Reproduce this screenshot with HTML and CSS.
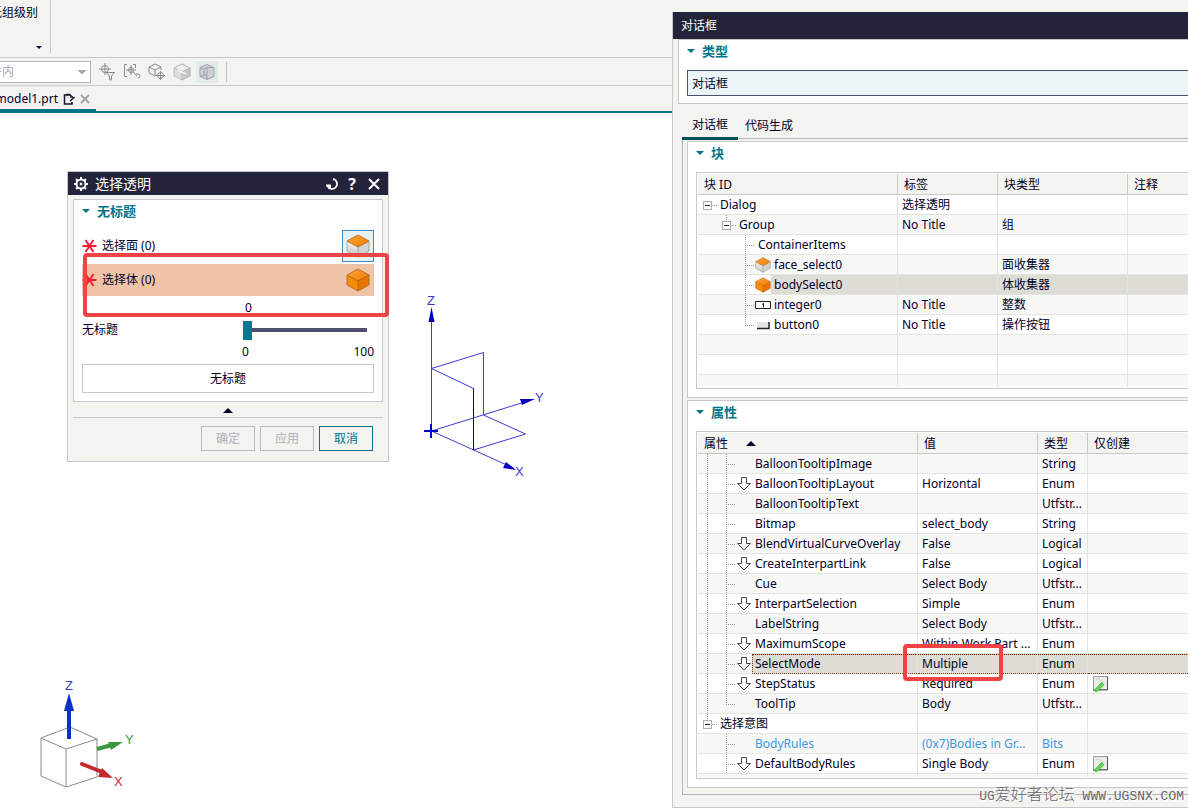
FILE: index.html
```html
<!DOCTYPE html>
<html lang="zh-CN">
<head>
    <meta charset="utf-8">
    <title>model1.prt</title>
    <link rel="stylesheet" href="styles.css">
</head>

<body>
    <!-- Shared icons -->
    <svg class="sprite" aria-hidden="true">
        <defs>
            <linearGradient id="orangeTop" x1="0" y1="0" x2="1" y2="1">
                <stop offset="0" stop-color="#ffa53a"/>
                <stop offset="1" stop-color="#f07c00"/>
            </linearGradient>
            <linearGradient id="greySide" x1="0" y1="0" x2="0" y2="1">
                <stop offset="0" stop-color="#f4f4f4"/>
                <stop offset="1" stop-color="#c4c4c4"/>
            </linearGradient>
        </defs>
        <symbol id="face" viewBox="0 0 24 24">
            <path d="M1 7v10l11 6V12z" fill="url(#greySide)"/>
            <path d="M23 7v10l-11 6V12z" fill="#d2d2d2"/>
            <path d="M12 1l11 6-11 6L1 7z" fill="url(#orangeTop)" stroke="#b86a10" stroke-width=".9"/>
            <path d="M1 7v10l11 6 11-6V7M12 13v10" fill="none" stroke="#a0a0a0" stroke-width=".9"/>
        </symbol>
        <symbol id="body" viewBox="0 0 24 24">
            <path d="M1 7v10l11 6V12z" fill="#f58a0c"/>
            <path d="M23 7v10l-11 6V12z" fill="#e67800"/>
            <path d="M12 1l11 6-11 6L1 7z" fill="url(#orangeTop)"/>
            <path d="M12 1l11 6v10l-11 6-11-6V7zM1 7l11 6 11-6M12 13v10" fill="none" stroke="#a85a08" stroke-width=".7"/>
        </symbol>
        <symbol id="down" viewBox="0 0 16 16">
            <path d="M5.500 1.500h5v6h4L8 14 1.500 7.500h4z" fill="#fff" stroke="#444" stroke-width="1"/>
        </symbol>
        <symbol id="edit" viewBox="0 0 16 16">
            <path d="M1.500.5h14v13h-14z" fill="#ececec" stroke="#9a9a9a"/>
            <path d="M15.500.5v13.500H1" fill="none" stroke="#555"/>
            <path d="M4 4q5-3 7 4" fill="none" stroke="#8fcf8f" stroke-dasharray="1 1"/>
            <path d="M3 13.500l6.500-7 2.500 2-6.500 7-2.500.5z" fill="#67d457" stroke="#3aa63c" stroke-width=".7"/>
        </symbol>
        <symbol id="star" viewBox="0 0 14 14">
            <path d="M0 7h14M3 1l8 12M11 1L3 13" stroke="#fa1e32" stroke-width="2" fill="none"/>
        </symbol>
    </svg>

    <div class="app">
        <div class="ribbon">
            <div class="ribbon-group">
                <span>低组级别</span>
                <i class="caret"></i>
            </div>
        </div>

        <div class="selection-bar">
            <select class="scope" aria-label="范围" disabled>
                <option>件内</option>
            </select>
            <button class="tool" aria-label="过滤器">
                <svg width="18" height="18" viewBox="0 0 18 18" fill="none" stroke="#8b8b90">
                    <circle cx="7" cy="6" r="3.500"/><path d="M1 6h12M7 0v12"/>
                    <path d="M8.500 9.500h8l-3 3.500v4h-2v-4z" fill="#f3f3f0"/>
                </svg>
            </button>
            <button class="tool" aria-label="选择范围">
                <svg width="18" height="18" viewBox="0 0 18 18" fill="none" stroke="#8b8b90">
                    <path d="M4 1.500H1.500v12H4M10 1.500h2.500V5"/><circle cx="8" cy="7" r="2.500"/><path d="M3 7h10M8 2v10M13 11h2q2 0 2 2t-2 2M10 9l4 4"/>
                </svg>
            </button>
            <button class="tool" aria-label="选择对象">
                <svg width="18" height="18" viewBox="0 0 18 18" fill="none" stroke="#8b8b90">
                    <path d="M8.500 12L7 13l-6-3V4l6-3 6 3v3M1 4l6 3 6-3M7 7v5"/><circle cx="12.500" cy="12.500" r="3"/><path d="M8 12.500h9M12.500 8v9"/>
                </svg>
            </button>
            <button class="tool" aria-label="着色">
                <svg width="18" height="18" viewBox="0 0 18 18" stroke="#b4b4b6" stroke-width=".8">
                    <path d="M9 1l8 4v8l-8 4-8-4V5z" fill="#dcdcdc"/><path d="M9 1l8 4-8 4-8-4z" fill="#eee"/><path d="M9 9l8-4v8l-8 4z" fill="#c8c8ca"/>
                    <path d="M5 7.500l8 3.500" stroke="#f5f5f5" stroke-width="1.500"/>
                </svg>
            </button>
            <button class="tool active" aria-label="透明">
                <svg width="18" height="18" viewBox="0 0 18 18" stroke="#a0a0a5" fill="#cfd1d4">
                    <path d="M9 1.500l7 3v9l-7 3-7-3v-9z"/><path d="M2 4.500l4 2 3-2 7 0M9 4.500v12M6 6.500V12l-4 1.500M6 12l3 1" fill="none"/>
                </svg>
            </button>
            <i class="separator"></i>
        </div>

        <div class="file-tabs">
            <a class="file-tab" href="#">
                <span>model1.prt</span>
                <svg width="12" height="12" viewBox="0 0 12 12" fill="none" stroke="#16162e" stroke-width="1.500">
                    <path d="M8 2H1.500v9H9V9M3 1.500h4M8 2v2h2M7 8l4.500-4"/>
                </svg>
                <svg width="10" height="10" viewBox="0 0 10 10" stroke="#a3a3a8" stroke-width="2"><path d="M1 1l8 8M9 1L1 9"/></svg>
            </a>
        </div>

        <main class="canvas">
            <svg class="datum" width="130" height="200" viewBox="0 0 130 200" fill="none" stroke="#3c3cd2">
                <path d="M16.500 30v121M16.500 88.500l52-16v62M16.500 88.500l42 20M16.500 151l90-28M16.500 151l82 37M68.500 135l42 19-52 16"/>
                <path d="M58.500 108v62" stroke="#000090"/>
                <path d="M9 151h14M16 144v14" stroke="#0000d0" stroke-width="2"/>
                <path d="M16.500 27l3 15h-6zM120 119l-13 6-2-6zM101 190l-13-2 3-6z" fill="#0000c0" stroke="none"/>
                <g class="axis"><text x="12" y="25">Z</text><text x="120" y="122">Y</text><text x="100" y="196">X</text></g>
            </svg>

            <svg class="view-triad" width="110" height="120" viewBox="0 0 110 120" fill="none">
                <path d="M11 65l29-11 27 12v38l-31 10-25-11zM11 65l25 11 31-10M36 76v38" stroke="#8a8a8a"/>
                <path d="M39 66V36" stroke="#0a32c8" stroke-width="4"/><path d="M39 20l5 18H34z" fill="#0a32c8"/>
                <path d="M67 76l15-4" stroke="#3b9a40" stroke-width="4"/><path d="M93 69l-12 8-3-8z" fill="#3b9a40"/>
                <path d="M52 91l20 8" stroke="#c4282c" stroke-width="4" stroke-linecap="round"/><path d="M83 105l-15-1 4-9z" fill="#c4282c"/>
                <g class="axis"><text class="z" x="35" y="17">Z</text><text class="y" x="95" y="71">Y</text><text class="x" x="84" y="113">X</text></g>
            </svg>
        </main>
    </div>

    <!-- Preview dialog -->
    <section class="window preview">
        <header class="titlebar">
            <svg width="16" height="16" viewBox="0 0 16 16" fill="none" stroke="#fff">
                <circle cx="8" cy="8" r="4.500" stroke-width="2"/><circle cx="8" cy="8" r="1" fill="#fff"/>
                <path d="M8 1v2M8 13v2M1 8h2M13 8h2M3 3l1.500 1.500M11.500 11.500L13 13M13 3l-1.500 1.500M4.500 11.500L3 13" stroke-width="2"/>
            </svg>
            <h1>选择透明</h1>
            <button aria-label="重置">
                <svg width="14" height="14" viewBox="0 0 14 14" fill="none" stroke="#fff" stroke-width="2"><path d="M8 2a5 5 0 1 1-5.500 7M1 8.500h4v3.500" stroke-width="1.800"/></svg>
            </button>
            <button class="help">?</button>
            <button aria-label="关闭">
                <svg width="12" height="12" viewBox="0 0 12 12" stroke="#fff" stroke-width="2"><path d="M1 1l10 10M11 1L1 11"/></svg>
            </button>
        </header>
        <div class="preview-body">
            <div class="panel">
                <h2>无标题</h2>
                <div class="pick">
                    <svg width="15" height="14"><use href="#star"/></svg>
                    <span>选择面 (0)</span>
                    <button class="pick-button focused" aria-label="选择面"><svg width="24" height="24"><use href="#face"/></svg></button>
                </div>
                <div class="pick current">
                    <svg width="15" height="14"><use href="#star"/></svg>
                    <span>选择体 (0)</span>
                    <button class="pick-button" aria-label="选择体"><svg width="24" height="24"><use href="#body"/></svg></button>
                </div>
                <div class="slider">
                    <output for="level">0</output>
                    <label for="level">无标题</label>
                    <input type="range" id="level" min="0" max="100" value="0">
                    <div class="limits"><span>0</span><span>100</span></div>
                </div>
                <button class="action">无标题</button>
            </div>
            <div class="collapse"><i class="caret up"></i></div>
            <footer>
                <button disabled>确定</button>
                <button disabled>应用</button>
                <button class="cancel">取消</button>
            </footer>
        </div>
        <div class="mark mark-body"></div>
    </section>

    <!-- Block styler dialog -->
    <section class="window styler">
        <header class="titlebar"><h1>对话框</h1></header>
        <div class="styler-body">
            <div class="panel">
                <h2><label for="kind">类型</label></h2>
                <input class="kind" id="kind" type="text" value="对话框">
            </div>
            <nav class="tabs">
                <a class="active" href="#">对话框</a>
                <a href="#">代码生成</a>
            </nav>
            <div class="tab-body">
                <div class="panel">
                    <h2>块</h2>
                    <div class="table-box">
                        <table class="blocks">
                            <colgroup><col class="c200"><col class="c100"><col class="c130"><col></colgroup>
                            <thead>
                                <tr><th>块 ID</th><th>标签</th><th>块类型</th><th>注释</th></tr>
                            </thead>
                            <tbody>
                                <tr><td><div class="node"><i class="box"></i><span>Dialog</span></div></td><td>选择透明</td><td></td><td></td></tr>
                                <tr><td><div class="node"><i></i><i class="box below"></i><span>Group</span></div></td><td>No Title</td><td>组</td><td></td></tr>
                                <tr><td><div class="node"><i></i><i></i><i class="branch"></i><span>ContainerItems</span></div></td><td></td><td></td><td></td></tr>
                                <tr><td><div class="node"><i></i><i></i><i class="branch"></i><svg><use href="#face"/></svg><span>face_select0</span></div></td><td></td><td>面收集器</td><td></td></tr>
                                <tr class="selected"><td><div class="node"><i></i><i></i><i class="branch"></i><svg><use href="#body"/></svg><span>bodySelect0</span></div></td><td></td><td>体收集器</td><td></td></tr>
                                <tr><td><div class="node"><i></i><i></i><i class="branch"></i><svg viewBox="0 0 16 16"><path d="M.5 4.500h15v7H.5z" fill="#fff" stroke="#222"/><path d="M7 7.500l1.500-1v4" fill="none" stroke="#222"/></svg><span>integer0</span></div></td><td>No Title</td><td>整数</td><td></td></tr>
                                <tr><td><div class="node"><i></i><i></i><i class="branch end"></i><svg viewBox="0 0 16 16"><path d="M2 5h11v6H2z" fill="#e4e4e4"/><path d="M2 11.500h12V5" fill="none" stroke="#222" stroke-width="1.500"/></svg><span>button0</span></div></td><td>No Title</td><td>操作按钮</td><td></td></tr>
                                <tr><td></td><td></td><td></td><td></td></tr>
                                <tr><td></td><td></td><td></td><td></td></tr>
                                <tr class="cut"><td></td><td></td><td></td><td></td></tr>
                            </tbody>
                        </table>
                    </div>
                </div>
                <div class="panel">
                    <h2>属性</h2>
                    <div class="table-box">
                        <table class="props">
                            <colgroup><col class="c220"><col class="c120"><col class="c50"><col></colgroup>
                            <thead>
                                <tr><th>属性<i class="caret up sort"></i></th><th>值</th><th>类型</th><th>仅创建</th></tr>
                            </thead>
                            <tbody>
                                <tr><td><div class="node"><i class="line"></i><i class="branch"></i><svg></svg><span>BalloonTooltipImage</span></div></td><td></td><td>String</td><td></td></tr>
                                <tr><td><div class="node"><i class="line"></i><i class="branch"></i><svg><use href="#down"/></svg><span>BalloonTooltipLayout</span></div></td><td>Horizontal</td><td>Enum</td><td></td></tr>
                                <tr><td><div class="node"><i class="line"></i><i class="branch"></i><svg></svg><span>BalloonTooltipText</span></div></td><td></td><td>Utfstr...</td><td></td></tr>
                                <tr><td><div class="node"><i class="line"></i><i class="branch"></i><svg></svg><span>Bitmap</span></div></td><td>select_body</td><td>String</td><td></td></tr>
                                <tr><td><div class="node"><i class="line"></i><i class="branch"></i><svg><use href="#down"/></svg><span>BlendVirtualCurveOverlay</span></div></td><td>False</td><td>Logical</td><td></td></tr>
                                <tr><td><div class="node"><i class="line"></i><i class="branch"></i><svg><use href="#down"/></svg><span>CreateInterpartLink</span></div></td><td>False</td><td>Logical</td><td></td></tr>
                                <tr><td><div class="node"><i class="line"></i><i class="branch"></i><svg></svg><span>Cue</span></div></td><td>Select Body</td><td>Utfstr...</td><td></td></tr>
                                <tr><td><div class="node"><i class="line"></i><i class="branch"></i><svg><use href="#down"/></svg><span>InterpartSelection</span></div></td><td>Simple</td><td>Enum</td><td></td></tr>
                                <tr><td><div class="node"><i class="line"></i><i class="branch"></i><svg></svg><span>LabelString</span></div></td><td>Select Body</td><td>Utfstr...</td><td></td></tr>
                                <tr><td><div class="node"><i class="line"></i><i class="branch"></i><svg><use href="#down"/></svg><span>MaximumScope</span></div></td><td>Within Work Part ...</td><td>Enum</td><td></td></tr>
                                <tr class="selected focus"><td><div class="node"><i class="line"></i><i class="branch"></i><svg><use href="#down"/></svg><span>SelectMode</span></div></td><td class="marked">Multiple<div class="mark mark-value"></div></td><td>Enum</td><td></td></tr>
                                <tr><td><div class="node"><i class="line"></i><i class="branch"></i><svg><use href="#down"/></svg><span>StepStatus</span></div></td><td>Required</td><td>Enum</td><td><svg class="edit"><use href="#edit"/></svg></td></tr>
                                <tr><td><div class="node"><i class="line"></i><i class="branch end"></i><svg></svg><span>ToolTip</span></div></td><td>Body</td><td>Utfstr...</td><td></td></tr>
                                <tr><td><div class="node"><i class="box below"></i><span>选择意图</span></div></td><td></td><td></td><td></td></tr>
                                <tr class="derived"><td><div class="node"><i></i><i class="branch"></i><svg></svg><span>BodyRules</span></div></td><td>(0x7)Bodies in Gr...</td><td>Bits</td><td></td></tr>
                                <tr><td><div class="node"><i></i><i class="branch"></i><svg><use href="#down"/></svg><span>DefaultBodyRules</span></div></td><td>Single Body</td><td>Enum</td><td><svg class="edit"><use href="#edit"/></svg></td></tr>
                                <tr class="cut"><td></td><td></td><td></td><td></td></tr>
                            </tbody>
                        </table>
                    </div>
                </div>
            </div>
        </div>
        <div class="watermark">UG<span>爱好者论坛</span> WWW.UGSNX.COM</div>
    </section>
</body>
</html>
```

FILE: styles.css
```css
* {
    box-sizing: border-box;
}

body {
    margin: 0;
    height: 100vh;
    overflow: hidden;
    position: relative;
    font-family: "Noto Sans", "Noto Sans CJK SC", sans-serif;
    font-size: 12px;
    line-height: 16px;
    color: #000028;
    background-color: #fff;
}

button,
input,
select {
    font: inherit;
    color: inherit;
    padding: 0;
    border: none;
    background: none;
}

a {
    color: inherit;
    text-decoration: none;
}

h1,
h2 {
    margin: 0;
    font-weight: normal;
}

svg {
    flex-shrink: 0;
}

.sprite {
    position: absolute;
    width: 0;
    height: 0;
}

.caret {
    border: 3px solid transparent;
    border-top-color: #000028;
    border-bottom: none;
}

.caret.up {
    border: 5px solid transparent;
    border-bottom-color: #000028;
    border-top: none;
}

/* Main window */
.app {
    display: flex;
    flex-direction: column;
    height: 100%;
}

.ribbon,
.selection-bar {
    display: flex;
    background-color: #f3f3f0;
    border-bottom: 1px solid #c8c8cc;
}

.ribbon {
    height: 58px;
    padding-bottom: 4px;
}

.ribbon-group {
    display: flex;
    flex-direction: column;
    align-items: flex-end;
    justify-content: space-between;
    width: 51px;
    padding: 5px 8px 4px 0;
    border-right: 1px solid #c8c8cc;
}

.ribbon-group span {
    white-space: nowrap;
    margin-right: 4px;
}

.selection-bar {
    align-items: center;
    gap: 3px;
    height: 28px;
}

.scope {
    width: 110px;
    height: 22px;
    margin-left: -19px;
    margin-right: 2px;
    padding-left: 8px;
    appearance: none;
    border: 1px solid #b4b4ba;
    color: #a5a5ad;
    opacity: 1;
    background-color: #fff;
    background-image: conic-gradient(from -45deg at 50% 100%, #a5a5ad 90deg, transparent 0);
    background-image: linear-gradient(45deg, transparent 50%, #a5a5ad 50%), linear-gradient(-45deg, transparent 50%, #a5a5ad 50%);
    background-size: 4px 4px;
    background-position: right 8px center, right 4px center;
    background-repeat: no-repeat;
}

.tool {
    display: flex;
    align-items: center;
    justify-content: center;
    width: 22px;
    height: 22px;
}

.tool.active {
    background-color: #e1ebee;
}

.separator {
    width: 1px;
    height: 20px;
    margin-left: 5px;
    background-color: #c0c0c4;
}

.file-tabs {
    display: flex;
    height: 27px;
    background-color: #f3f3f0;
    border-bottom: 2px solid #00758a;
}

.file-tab {
    display: flex;
    align-items: center;
    justify-content: flex-end;
    gap: 5px;
    width: 96px;
    padding: 2px 6px 0 0;
    border-bottom: 2px solid #00758a;
}

.canvas {
    flex: 1;
    position: relative;
    background-color: #fff;
}

.datum {
    position: absolute;
    left: 415px;
    top: 167px;
}

.view-triad {
    position: absolute;
    left: 30px;
    bottom: 15px;
}

.axis {
    font-family: "Liberation Sans", sans-serif;
    font-size: 13px;
    fill: #3c3ccc;
    stroke: none;
}

.axis .y {
    fill: #3b9a40;
}

.axis .x {
    fill: #c4282c;
}

/* Windows */
.window {
    position: absolute;
    background-color: #f3f3f0;
    border: 1px solid #c8c8cc;
}

.titlebar {
    display: flex;
    align-items: center;
    background-color: #23233c;
    color: #fff;
}

.titlebar h1 {
    flex: 1;
    font-size: 12px;
}

.panel {
    padding: 0 8px 8px;
    background-color: #fff;
    border: 1px solid #c8c8cc;
}

.panel h2 {
    display: flex;
    align-items: center;
    gap: 7px;
    height: 24px;
    margin-bottom: 6px;
    padding-bottom: 2px;
    font-size: 13px;
    font-weight: bold;
    color: #00758a;
}

.panel h2::before {
    content: "";
    border: 4px solid transparent;
    border-top-color: #00758a;
    border-bottom: none;
}

.mark {
    position: absolute;
    border: 4px solid #f04444;
    border-radius: 4px;
    pointer-events: none;
}

/* Preview dialog */
.preview {
    left: 67px;
    top: 171px;
    width: 322px;
}

.preview .titlebar {
    height: 23px;
    gap: 6px;
    padding: 0 7px 0 5px;
}

.preview .titlebar h1 {
    font-size: 14px;
}

.titlebar button {
    display: flex;
    align-items: center;
    justify-content: center;
    width: 14px;
}

.titlebar .help {
    font-size: 16px;
    font-weight: bold;
    margin-right: 2px;
}

.preview-body {
    padding: 4px 5px 10px;
}

.pick {
    display: flex;
    align-items: center;
    gap: 5px;
    margin-bottom: 2px;
}

.pick.current {
    background-color: #f0c3a6;
}

.pick span {
    flex: 1;
}

.pick-button {
    display: flex;
    align-items: center;
    justify-content: center;
    width: 32px;
    height: 32px;
}

.pick-button.focused {
    background-color: #e6f2f5;
    border: 1px solid #3c8cc0;
}

.pick.current .pick-button {
    border: 1px solid #e5c3b0;
}

.slider {
    display: grid;
    grid-template-columns: 1fr 132px;
    row-gap: 4px;
    align-items: center;
    padding-top: 2px;
    margin-bottom: 4px;
}

.slider output,
.limits {
    grid-column: 2;
}

.slider output {
    padding-left: 3px;
}

.slider input {
    appearance: none;
    width: 124px;
    height: 20px;
    margin: 0 0 0 1px;
    background: linear-gradient(#50506e, #50506e) center / 100% 4px no-repeat;
}

.slider input::-webkit-slider-thumb {
    appearance: none;
    width: 9px;
    height: 19px;
    background-color: #007993;
}

.limits {
    display: flex;
    justify-content: space-between;
}

.action {
    display: block;
    width: 100%;
    height: 29px;
    border: 1px solid #c8c8cc;
}

.collapse {
    display: flex;
    align-items: center;
    justify-content: center;
    height: 16px;
    padding-top: 2px;
    border-bottom: 1px solid #c8c8cc;
}

.preview footer {
    display: flex;
    justify-content: flex-end;
    gap: 5px;
    padding: 8px 10px 0;
}

.preview footer button {
    width: 54px;
    height: 25px;
    border: 1px solid #b9b9c0;
    color: #b0b0ba;
}

.preview footer .cancel {
    border-color: #00758a;
    color: #00758a;
}

.mark-body {
    left: 15px;
    right: -1px;
    top: 81px;
    height: 64px;
}

/* Block styler dialog */
.styler {
    left: 672px;
    right: 0;
    top: 12px;
    border-right: none;
    border-top: none;
}

.styler .titlebar {
    height: 27px;
    padding-left: 8px;
}

.styler-body {
    padding: 0 0 12px 5px;
}

.styler .panel {
    border-right: none;
    padding-right: 0;
}

.styler-body > .panel {
    padding-bottom: 7px;
}

.kind {
    display: block;
    width: 100%;
    height: 26px;
    padding: 0 4px 1px;
    border: 1px solid #50506e;
    border-right: none;
    background-color: #ebf5f8;
}

.tabs {
    display: flex;
    height: 34px;
    padding-left: 4px;
}

.tabs a {
    display: flex;
    align-items: center;
    height: 36px;
    padding: 8px 3px 0;
}

.tabs .active {
    width: 56px;
    margin-right: 4px;
    justify-content: center;
    border-bottom: 3px solid #005159;
    z-index: 1;
}

.tab-body {
    display: flex;
    flex-direction: column;
    gap: 2px;
    margin-left: 4px;
    padding: 2px 0 6px 4px;
    border: 1px solid #b4b4ba;
    border-right: none;
}

.table-box {
    padding: 1px 0 1px 1px;
    border: 1px solid #c8c8cc;
    border-right: none;
}

table {
    width: 100%;
    table-layout: fixed;
    border-collapse: separate;
    border-spacing: 0;
}

.c200 {
    width: 200px;
}

.c220 {
    width: 220px;
}

.c100 {
    width: 100px;
}

.c120 {
    width: 120px;
}

.c130 {
    width: 130px;
}

.c50 {
    width: 50px;
}

th {
    height: 21px;
    padding: 2px 6px 0;
    line-height: 18px;
    font-weight: normal;
    text-align: left;
    background-color: #f3f3f0;
    border-right: 1px solid #c8c8cc;
    border-bottom: 1px solid #c8c8cc;
}

.sort {
    display: inline-block;
    margin-left: 18px;
    vertical-align: 2px;
}

td {
    height: 20px;
    padding: 0 0 0 4px;
    line-height: 19px;
    white-space: nowrap;
    border-right: 1px solid #e4e4df;
    border-bottom: 1px solid #e4e4df;
}

th:last-child,
td:last-child {
    border-right: none;
}

td:first-child {
    padding: 0;
}

.blocks tr:nth-child(even) td,
.props tbody tr:nth-child(odd) td {
    background-color: #f8f8f6;
}

.blocks .cut td {
    height: 12px;
    border-bottom: none;
}

.props .cut td {
    height: 3px;
    border-bottom: none;
}

.derived {
    color: #3c96e0;
}

.node {
    display: flex;
    align-items: center;
    height: 19px;
}

.node svg {
    width: 16px;
    height: 16px;
}

.node span {
    flex: 1;
    padding-left: 3px;
}

.edit {
    display: block;
    width: 16px;
    height: 16px;
}

/* Tree guides, one 19px column per level */
.node i {
    width: 19px;
    height: 20px;
    margin-bottom: -1px;
    background-repeat: no-repeat;
}

.node .line {
    background-image: repeating-linear-gradient(#9a9a9a 0 1px, transparent 1px 2px);
    background-size: 1px 100%;
    background-position: 9px 0;
}

.node .branch {
    background-image: repeating-linear-gradient(#9a9a9a 0 1px, transparent 1px 2px), repeating-linear-gradient(to right, #9a9a9a 0 1px, transparent 1px 2px);
    background-size: 1px 100%, 9px 1px;
    background-position: 9px 0, 9px 10px;
}

.node .branch.end {
    background-size: 1px 10px, 9px 1px;
}

.node .box {
    background-image: linear-gradient(#222, #222), linear-gradient(#fff, #fff), linear-gradient(#b0b0b0, #b0b0b0), repeating-linear-gradient(to right, #9a9a9a 0 1px, transparent 1px 2px);
    background-size: 5px 1px, 7px 7px, 9px 9px, 5px 1px;
    background-position: 7px 10px, 6px 7px, 5px 6px, 14px 10px;
}

.node .box.below {
    background-image: linear-gradient(#222, #222), linear-gradient(#fff, #fff), linear-gradient(#b0b0b0, #b0b0b0), repeating-linear-gradient(to right, #9a9a9a 0 1px, transparent 1px 2px), repeating-linear-gradient(#9a9a9a 0 1px, transparent 1px 2px);
    background-size: 5px 1px, 7px 7px, 9px 9px, 5px 1px, 1px 6px;
    background-position: 7px 10px, 6px 7px, 5px 6px, 14px 10px, 9px 0;
}

.blocks .selected td:not(:first-child),
.props .selected td:not(:first-child),
.selected .node span {
    background-color: #deddd5;
}

/* Focus frame round the current row */
.focus td:not(:first-child),
.focus .node span {
    background-image: repeating-linear-gradient(to right, #5a2a10 0 1px, #e8a060 1px 2px);
    background-size: 100% 1px;
    background-repeat: no-repeat;
}

.focus td:not(:first-child),
.focus .node span {
    border-bottom: 1px dotted #7a3a10;
}

.focus .node span {
    height: 20px;
    margin-bottom: -1px;
    border-left: 1px dotted #7a3a10;
    padding-left: 2px;
}

.marked {
    position: relative;
}

.mark-value {
    left: -15px;
    top: -10px;
    width: 100px;
    height: 37px;
}

.watermark {
    position: absolute;
    right: 4px;
    bottom: 2px;
    font-family: "Liberation Mono", "Noto Sans CJK SC", monospace;
    font-size: 13px;
    color: #66666a;
    text-shadow: 1px 1px 0 #fff;
    white-space: nowrap;
}

.watermark span {
    font-size: 16px;
    font-weight: 300;
}
```
